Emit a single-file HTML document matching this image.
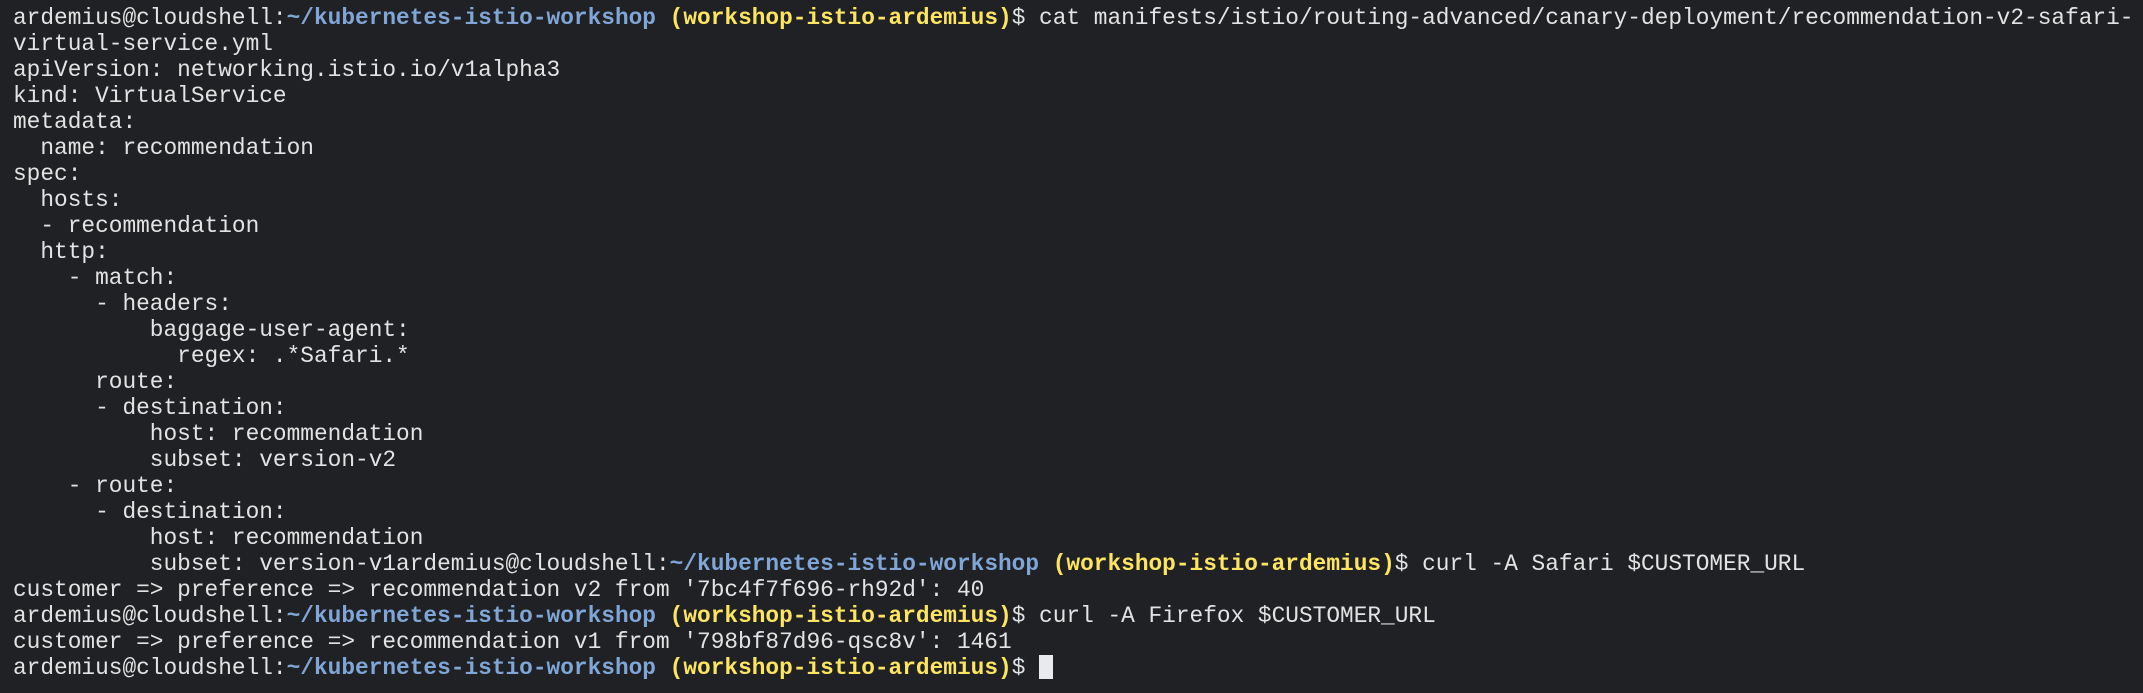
<!DOCTYPE html>
<html><head><meta charset="utf-8"><style>
html,body{margin:0;padding:0;background:#202124;width:2143px;height:693px;overflow:hidden}
pre{margin:0;padding:5px 0 0 13px;font-family:"Liberation Mono","Courier New",monospace;font-size:22.8px;line-height:26px;color:#e3e3e3;white-space:pre}
.b{color:#7fa6d6;font-weight:bold}.y{color:#fde560;font-weight:bold}
.cur{display:inline-block;width:14px;height:24px;background:#e8eaed;vertical-align:-5px}
</style></head><body><pre>ardemius@cloudshell:<span class="b">~/kubernetes-istio-workshop</span> <span class="y">(workshop-istio-ardemius)</span>$ cat manifests/istio/routing-advanced/canary-deployment/recommendation-v2-safari-
virtual-service.yml
apiVersion: networking.istio.io/v1alpha3
kind: VirtualService
metadata:
  name: recommendation
spec:
  hosts:
  - recommendation
  http:
    - match:
      - headers:
          baggage-user-agent:
            regex: .*Safari.*
      route:
      - destination:
          host: recommendation
          subset: version-v2
    - route:
      - destination:
          host: recommendation
          subset: version-v1ardemius@cloudshell:<span class="b">~/kubernetes-istio-workshop</span> <span class="y">(workshop-istio-ardemius)</span>$ curl -A Safari $CUSTOMER_URL
customer =&gt; preference =&gt; recommendation v2 from '7bc4f7f696-rh92d': 40
ardemius@cloudshell:<span class="b">~/kubernetes-istio-workshop</span> <span class="y">(workshop-istio-ardemius)</span>$ curl -A Firefox $CUSTOMER_URL
customer =&gt; preference =&gt; recommendation v1 from '798bf87d96-qsc8v': 1461
ardemius@cloudshell:<span class="b">~/kubernetes-istio-workshop</span> <span class="y">(workshop-istio-ardemius)</span>$ <span class="cur"></span></pre></body></html>
